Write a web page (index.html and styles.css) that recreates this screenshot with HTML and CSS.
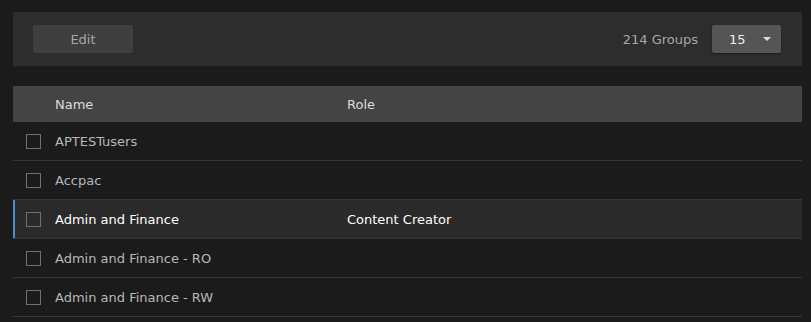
FILE: index.html
```html
<!DOCTYPE html>
<html>
<head>
<meta charset="utf-8">
<link rel="stylesheet" href="styles.css">
</head>
<body>
<div class="page">
  <div class="toolbar">
    <button class="btn-edit">Edit</button>
    <div class="toolbar-right">
      <span class="count">214 Groups</span>
      <div class="select"><span>15</span><span class="caret"></span></div>
    </div>
  </div>
  <div class="table">
    <div class="row head">
      <div class="cell-check"></div>
      <div class="cell-name">Name</div>
      <div class="cell-role">Role</div>
    </div>
    <div class="row">
      <div class="cell-check"><span class="box"></span></div>
      <div class="cell-name">APTESTusers</div>
      <div class="cell-role"></div>
    </div>
    <div class="row">
      <div class="cell-check"><span class="box"></span></div>
      <div class="cell-name">Accpac</div>
      <div class="cell-role"></div>
    </div>
    <div class="row active">
      <div class="cell-check"><span class="box"></span></div>
      <div class="cell-name">Admin and Finance</div>
      <div class="cell-role">Content Creator</div>
    </div>
    <div class="row">
      <div class="cell-check"><span class="box"></span></div>
      <div class="cell-name">Admin and Finance - RO</div>
      <div class="cell-role"></div>
    </div>
    <div class="row">
      <div class="cell-check"><span class="box"></span></div>
      <div class="cell-name">Admin and Finance - RW</div>
      <div class="cell-role"></div>
    </div>
  </div>
</div>
</body>
</html>
```
FILE: styles.css
```css
html, body {
  margin: 0;
  padding: 0;
  background: #1b1b1b;
  font-family: "DejaVu Sans", sans-serif;
  font-size: 13px;
}
.page {
  padding: 12px 9px 0 13px;
}
.toolbar {
  background: #2d2d2d;
  height: 54px;
  display: flex;
  align-items: center;
  justify-content: space-between;
  padding: 0 21px 0 20px;
}
.btn-edit {
  width: 100px;
  height: 28px;
  background: #3f3f3f;
  border: none;
  border-radius: 2px;
  color: #a8a8a8;
  font-family: inherit;
  font-size: 13px;
  padding: 0;
}
.toolbar-right {
  display: flex;
  align-items: center;
}
.count {
  color: #a8a8a8;
  margin-right: 14px;
}
.select {
  width: 69px;
  height: 28px;
  background: #555;
  border-radius: 2px;
  box-shadow: 0 1px 2px rgba(0,0,0,0.4);
  display: flex;
  align-items: center;
  box-sizing: border-box;
  padding-left: 17px;
  color: #eee;
}
.caret {
  margin-left: 17px;
  width: 0;
  height: 0;
  border-left: 4px solid transparent;
  border-right: 4px solid transparent;
  border-top: 4px solid #ddd;
}
.table {
  margin-top: 20px;
}
.row {
  display: flex;
  align-items: center;
  height: 38px;
  border-bottom: 1px solid #353535;
  color: #b8b8b8;
  box-sizing: content-box;
}
.row.head {
  background: #444;
  height: 36px;
  border-bottom: none;
  color: #dcdcdc;
}
.row.active {
  background: #2a2a2a;
  color: #fff;
  box-shadow: inset 2px 0 0 #4a8ccc;
}
.cell-check {
  width: 42px;
  display: flex;
  padding-left: 13px;
  box-sizing: border-box;
}
.box {
  width: 13px;
  height: 13px;
  border: 1px solid #707070;
}
.cell-name {
  width: 292px;
}
.cell-role {
  flex: 1;
}
```
